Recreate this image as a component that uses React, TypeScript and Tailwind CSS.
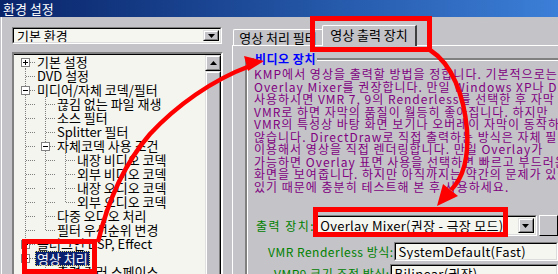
import React from "react";

type CellT = "pass" | "tee" | "end" | "top";

function Cell({ t, box }: { t: CellT; box?: "+" | "-" }) {
  const y1 = t === "top" ? 7 : 0;
  const y2 = t === "end" ? 7 : 14;
  return (
    <svg width="20" height="14" className="flex-none block" shapeRendering="crispEdges">
      <line x1="10.5" y1={y1} x2="10.5" y2={y2} stroke="#808080" strokeDasharray="1 1" />
      <line x1="11" y1="7.5" x2="20" y2="7.5" stroke="#808080" strokeDasharray="1 1" />
      {box && (
        <g>
          <rect x="6.5" y="3.5" width="8" height="8" fill="#ffffff" stroke="#808080" />
          <line x1="8" y1="7.5" x2="13" y2="7.5" stroke="#000" />
          {box === "+" && <line x1="10.5" y1="5" x2="10.5" y2="10" stroke="#000" />}
        </g>
      )}
    </svg>
  );
}

function Row({ cells, text, selected }: { cells: { t: CellT; box?: "+" | "-" }[]; text: string; selected?: boolean }) {
  return (
    <div className="flex items-center h-[14px]">
      {cells.map((c, i) => (
        <Cell key={i} t={c.t} box={c.box} />
      ))}
      {selected ? (
        <span className="px-[2px] h-[15px] leading-[15px] bg-[#0a1f6e] text-white outline-1 outline-dotted outline-[#e8e070] -outline-offset-1 whitespace-nowrap">
          {text}
        </span>
      ) : (
        <span className="px-[2px] whitespace-nowrap">{text}</span>
      )}
    </div>
  );
}

function DropBtn() {
  return (
    <div className="w-[16px] h-full flex-none border border-t-[#e0e0e0] border-l-[#e0e0e0] border-b-black border-r-black">
      <div className="w-full h-full border border-t-white border-l-white border-b-[#808080] border-r-[#808080] bg-[#c4c4c8] flex items-center justify-center">
        <svg width="7" height="4" className="block">
          <polygon points="0,0 7,0 3.5,4" fill="#000" />
        </svg>
      </div>
    </div>
  );
}

function Combo({ text, className, btn = true }: { text: string; className: string; btn?: boolean }) {
  return (
    <div className={"border border-t-[#808080] border-l-[#808080] border-b-white border-r-white " + className}>
      <div className="h-full border border-t-black border-l-black border-b-[#dcdcdc] border-r-[#dcdcdc] bg-[#f6f6f0] flex items-stretch">
        <span className="flex-1 pl-[3px] whitespace-nowrap overflow-hidden flex items-center">{text}</span>
        {btn && (
          <div className="py-[1px] pr-[1px] flex">
            <DropBtn />
          </div>
        )}
      </div>
    </div>
  );
}

const purple = [
  "KMP에서 영상을 출력할 방법을 정합니다. 기본적으로는",
  "Overlay Mixer를 권장합니다. 만일 Windows XP나 DirectX 9를",
  "사용하시면 VMR 7, 9의 Renderless를 선택한 후 자막 출력을",
  "VMR로 하면 자막의 품질이 월등히 좋아집니다. 하지만",
  "VMR의 특성상 바탕 화면 보기나 오버레이 자막이 동작하지",
  "않습니다. DirectDraw로 직접 출력하는 방식은 자체 필터를",
  "이용해서 영상을 직접 렌더링합니다. 만일 Overlay가",
  "가능하면 Overlay 표면 사용을 선택하면 빠르고 부드러운",
  "화면을 보여줍니다. 하지만 아직까지는 약간의 문제가 있을 수",
  "있기 때문에 충분히 테스트해 본 후 사용하세요.",
];

export default function App() {
  const P: { t: CellT; box?: "+" | "-" } = { t: "pass" };
  return (
    <div className="relative w-[558px] h-[274px] overflow-hidden bg-[#c4c4c8] text-black font-['Noto_Sans_CJK_KR','Noto_Sans',sans-serif]">
      {/* title bar */}
      <div className="h-[17px] bg-gradient-to-r from-[#0a246a] to-[#3c7fd8] text-white text-[13px] leading-[17px] pl-[3px]">
        환경 설정
      </div>

      <div className="flex border-l border-l-white ml-[1px]">
        {/* left column */}
        <div className="w-[230px] flex-none pl-[10px] pt-[10px]">
          <Combo text="기본 환경" className="w-[210px] h-[17px] text-[13px] leading-[15px]" />
          <div className="mt-[8px] w-[211px] h-[230px] border-2 border-t-[#808080] border-l-[#808080] border-b-white border-r-white">
            <div className="h-full flex bg-[#f5f5ef] border-t border-t-black">
              <div className="flex-1 pl-[1px] text-[13px] leading-[14px] overflow-hidden">
                <Row cells={[{ t: "top", box: "+" }]} text="기본 설정" />
                <Row cells={[{ t: "tee" }]} text="DVD 설정" />
                <Row cells={[{ t: "tee", box: "-" }]} text="미디어/자체 코덱/필터" />
                <Row cells={[P, { t: "tee" }]} text="끊김 없는 파일 재생" />
                <Row cells={[P, { t: "tee" }]} text="소스 필터" />
                <Row cells={[P, { t: "tee" }]} text="Splitter 필터" />
                <Row cells={[P, { t: "tee", box: "-" }]} text="자체코덱 사용 조건" />
                <Row cells={[P, P, { t: "tee" }]} text="내장 비디오 코덱" />
                <Row cells={[P, P, { t: "tee" }]} text="외부 비디오 코덱" />
                <Row cells={[P, P, { t: "tee" }]} text="내장 오디오 코덱" />
                <Row cells={[P, P, { t: "end" }]} text="외부 오디오 코덱" />
                <Row cells={[P, { t: "tee" }]} text="다중 오디오 처리" />
                <Row cells={[P, { t: "end" }]} text="필터 우선순위 변경" />
                <Row cells={[{ t: "tee", box: "+" }]} text="플러그인 DSP, Effect" />
                <Row cells={[{ t: "tee", box: "-" }]} text="영상 처리" selected />
                <Row cells={[P, { t: "tee" }]} text="출력 컬러 스페이스" />
              </div>
              {/* scrollbar */}
              <div className="w-[16px] flex-none flex flex-col bg-[#e2e2e2]">
                <div className="h-[16px] border border-t-[#e0e0e0] border-l-[#e0e0e0] border-b-black border-r-black">
                  <div className="h-full border border-t-white border-l-white border-b-[#808080] border-r-[#808080] bg-[#c4c4c8] flex items-center justify-center">
                    <svg width="7" height="4" className="block">
                      <polygon points="0,4 7,4 3.5,0" fill="#000" />
                    </svg>
                  </div>
                </div>
                <div className="flex-1 border border-t-[#e0e0e0] border-l-[#e0e0e0] border-b-black border-r-black">
                  <div className="h-full border border-t-white border-l-white border-b-[#808080] border-r-[#808080] bg-[#c4c4c8]" />
                </div>
              </div>
            </div>
          </div>
        </div>

        {/* right column */}
        <div className="flex-1 pt-[8px] min-w-0">
          <div className="flex items-end h-[20px] text-[13px]">
            <div className="ml-[1px] h-[16px] w-[89px] border-t border-l border-t-white border-l-white rounded-tl-[2px] flex items-center justify-center whitespace-nowrap leading-[14px] pt-[1px]">
              영상 처리 필터
            </div>
            <div className="h-[21px] w-[95px] -mb-[1px] bg-[#c4c4c8] border-t border-l border-r-2 border-t-white border-l-white border-r-[#404040] rounded-tl-[2px] flex items-center justify-center whitespace-nowrap leading-[14px] pb-[3px] relative z-10">
              영상 출력 장치
            </div>
          </div>
          <div className="h-[240px] border-t border-l border-t-white border-l-white pl-[12px] pt-[12px]">
            {/* group box */}
            <div className="border-t-2 border-l-2 border-t-[#808080] border-l-[#808080] h-[300px]">
              <div className="border-t border-l border-t-white border-l-white h-full pl-[6px]">
                <div className="-mt-[9px] bg-[#c4c4c8] w-fit px-[1px] text-[12px] leading-[14px] font-bold tracking-[0.5px] text-[#0000ff]">
                  비디오 장치
                </div>
                <div className="mt-[2px] text-[12px] leading-[12.5px] tracking-[1px] text-[#800080] whitespace-nowrap">
                  {purple.map((l, i) => (
                    <div key={i}>{l}</div>
                  ))}
                </div>
                <div className="mt-[22px] text-[12px] text-[#008000]">
                  <div className="flex items-center h-[21px] ml-[2px]">
                    <span className="w-[61px] whitespace-nowrap tracking-[1.5px]">출력 장치:</span>
                    <Combo text="Overlay Mixer(권장 - 극장 모드)" className="w-[234px] h-[21px] text-[13px] tracking-[0.3px] text-black" />
                    <div className="ml-[2px] w-[20px] h-[21px] border border-t-white border-l-white border-b-black border-r-black" />
                  </div>
                  <div className="flex items-center h-[19px] mt-[6px] ml-[14px]">
                    <span className="w-[128px] whitespace-nowrap tracking-[0.5px]">VMR Renderless 방식:</span>
                    <Combo text="SystemDefault(Fast)" btn={false} className="w-[200px] h-[19px] text-[13px] tracking-[0.3px] text-black" />
                  </div>
                  <div className="flex items-center h-[19px] mt-[3px] ml-[20px]">
                    <span className="w-[122px] whitespace-nowrap tracking-[0.5px]">VMR9 크기 조정 방식:</span>
                    <Combo text="Bilinear(권장)" btn={false} className="w-[200px] h-[19px] text-[13px] tracking-[0.3px] text-black" />
                  </div>
                </div>
              </div>
            </div>
          </div>
        </div>
      </div>

      {/* annotation overlays */}
      <div className="absolute left-[310px] top-[16px] w-[122px] h-[36px] border-[5px] border-[#ff0000] z-20" />
      <div className="absolute left-[313px] top-[207px] w-[195px] h-[30px] border-[5px] border-[#ff0000] z-20" />
      <div className="absolute left-[22px] top-[239px] w-[75px] h-[35px] border-[5px] border-[#ff0000] z-20" />
      <svg className="absolute inset-0 z-30 pointer-events-none" width="558" height="274">
        <path d="M 98 242 C 108 200, 125 163, 150 134 C 176 106, 212 80, 250 66" fill="none" stroke="#ff0000" strokeWidth="4.5" />
        <polygon points="244,56 264,61 248,71" fill="#ff0000" />
        <path d="M 430 50 C 452 64, 464 95, 467 130 C 469 160, 463 178, 451 190" fill="none" stroke="#ff0000" strokeWidth="4.5" />
        <polygon points="443,184 458,196 437,206" fill="#ff0000" />
      </svg>
    </div>
  );
}
